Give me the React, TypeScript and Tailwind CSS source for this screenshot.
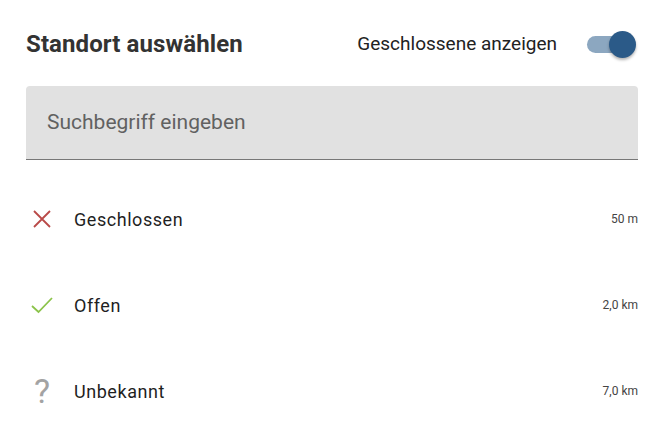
import React from "react";

const rows = [
  { kind: "closed", label: "Geschlossen", dist: "50 m" },
  { kind: "open", label: "Offen", dist: "2,0 km" },
  { kind: "unknown", label: "Unbekannt", dist: "7,0 km" },
];

function Icon({ kind }: { kind: string }) {
  if (kind === "closed")
    return (
      <svg width="20" height="20" viewBox="0 0 20 20">
        <path d="M2 2 L18 18 M18 2 L2 18" stroke="#b94a48" strokeWidth="1.8" fill="none" />
      </svg>
    );
  if (kind === "open")
    return (
      <svg width="22" height="18" viewBox="0 0 22 18">
        <path d="M1 10 L7.5 16 L21 2" stroke="#8bc34a" strokeWidth="1.8" fill="none" />
      </svg>
    );
  return <span className="text-[34px] leading-none text-[#a3a3a3]" style={{ fontFamily: "Roboto, sans-serif" }}>?</span>;
}

export default function App() {
  return (
    <div className="w-[664px] h-[432px] bg-white px-[26px] pt-[26px]" style={{ fontFamily: "Roboto, 'Noto Sans', sans-serif" }}>
      <div className="flex items-center h-[36px]">
        <div className="text-[24px] font-bold text-[#333333] tracking-[0.1px]">Standort auswählen</div>
        <div className="ml-auto text-[19px] text-[#222222] mr-[29px]">Geschlossene anzeigen</div>
        <div className="relative w-[48px] h-[28px] mr-[4px] flex items-center">
          <div className="w-[44px] h-[17px] rounded-full bg-[#8ca7c0] ml-[1px]"></div>
          <div className="absolute right-[-2px] top-[1px] w-[27px] h-[27px] rounded-full bg-[#2b5a88] shadow-[0_2px_3px_rgba(0,0,0,0.3)]"></div>
        </div>
      </div>
      <div className="mt-[24px] h-[74px] bg-[#e1e1e1] rounded-t-[4px] border-b border-[#777777] flex items-center px-[21px]">
        <span className="text-[21px] text-[#616161]">Suchbegriff eingeben</span>
      </div>
      <div className="mt-[16px] flex flex-col">
        {rows.map((r) => (
          <div key={r.label} className="h-[86px] flex items-center">
            <div className="w-[32px] flex items-center justify-center">
              <Icon kind={r.kind} />
            </div>
            <div className="ml-[16px] text-[18px] text-[#1f1f1f] tracking-[0.55px]">{r.label}</div>
            <div className="ml-auto text-[12px] text-[#444444]">{r.dist}</div>
          </div>
        ))}
      </div>
    </div>
  );
}
